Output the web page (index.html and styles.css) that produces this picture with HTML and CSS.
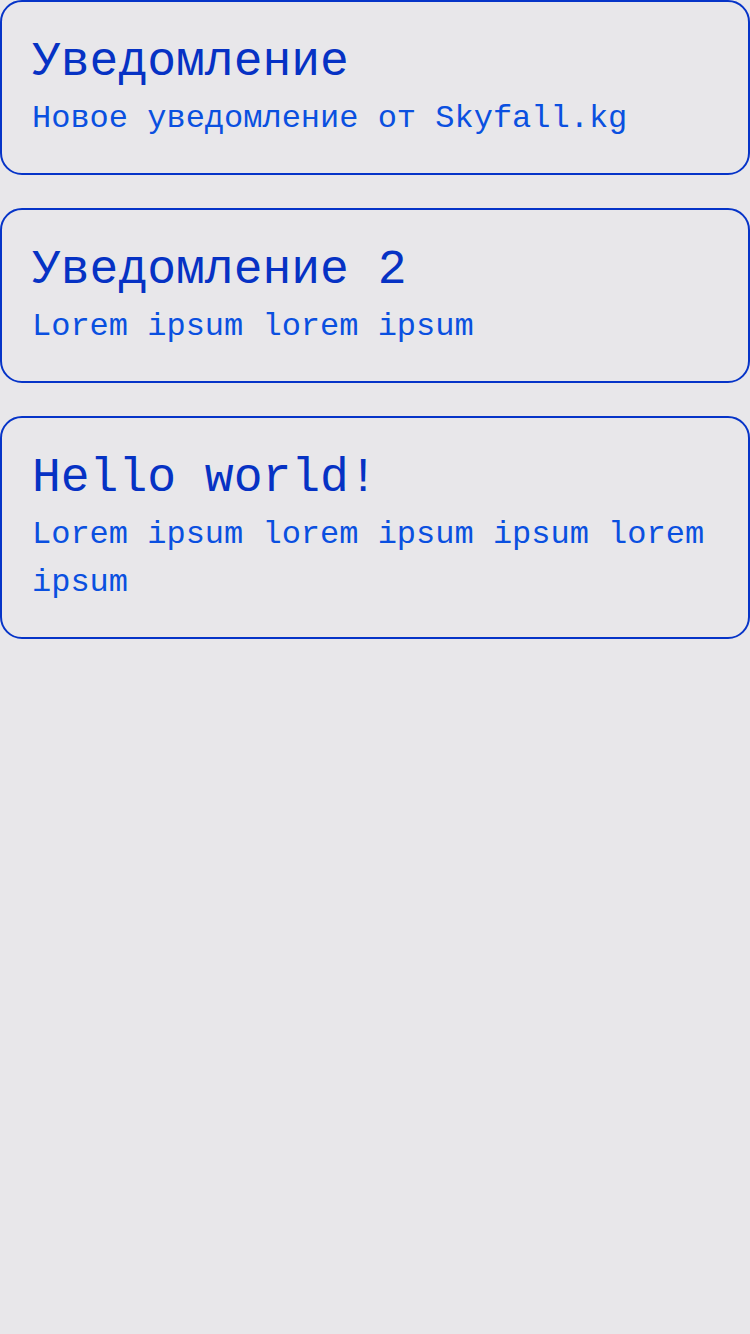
FILE: index.html
```html
<!DOCTYPE html>
<html lang="ru">
<head>
<meta charset="utf-8">
<link rel="stylesheet" href="styles.css">
</head>
<body>
<main class="list">
  <section class="card">
    <h2 class="card-title">Уведомление</h2>
    <p class="card-text">Новое уведомление от Skyfall.kg</p>
  </section>
  <section class="card">
    <h2 class="card-title">Уведомление 2</h2>
    <p class="card-text">Lorem ipsum lorem ipsum</p>
  </section>
  <section class="card">
    <h2 class="card-title">Hello world!</h2>
    <p class="card-text">Lorem ipsum lorem ipsum ipsum lorem ipsum</p>
  </section>
</main>
</body>
</html>
```
FILE: styles.css
```css
html, body {
  margin: 0;
  padding: 0;
  background: #e8e7ea;
}
body {
  font-family: "Liberation Mono", "DejaVu Sans Mono", monospace;
  min-height: 1334px;
}
.list {
  display: flex;
  flex-direction: column;
  gap: 33px;
}
.card {
  border: 2px solid #0634c8;
  border-radius: 22px;
  padding: 27px 30px 30px 30px;
}
.card-title {
  margin: 0;
  font-weight: normal;
  font-size: 48px;
  line-height: 66px;
  color: #0632c4;
}
.card-text {
  margin: 0;
  font-size: 32px;
  line-height: 48px;
  color: #0a50e0;
}
```
